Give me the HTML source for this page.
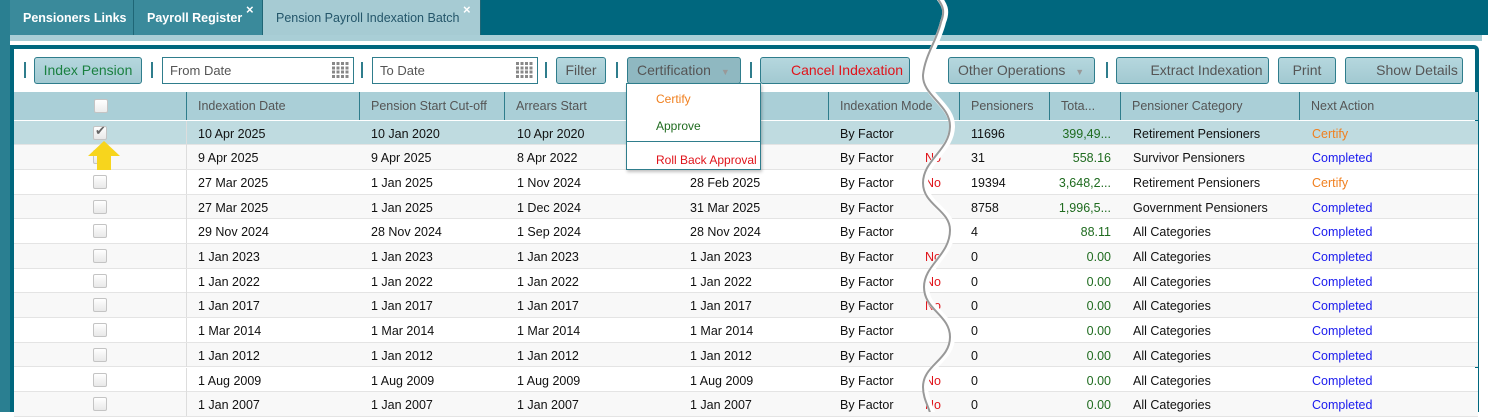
<!DOCTYPE html>
<html><head><meta charset="utf-8"><style>
*{box-sizing:border-box;margin:0;padding:0}
body{width:1488px;height:412px;overflow:hidden;background:#fff;font-family:"Liberation Sans",sans-serif;font-size:12.5px;color:#111;position:relative}
.a{position:absolute;white-space:nowrap}
.tab{position:absolute;top:0;height:35px;line-height:36px;font-weight:bold;color:#fff;font-size:12.5px;padding-left:13px;border-right:1px solid #1f6676}
.x{position:absolute;top:-6px;color:#fff;font-size:13px;font-weight:bold}
.btn{position:absolute;top:57px;height:27px;border:1px solid #2f7d8c;border-radius:3px;background:linear-gradient(#b5d7de,#a2c9d1);color:#555;font-size:14px;line-height:25px;text-align:center;white-space:nowrap}
.inp{position:absolute;top:57px;height:27px;border:1px solid #2f7d8c;background:#fff;color:#555;font-size:13px;line-height:25px;padding-left:7px}
.sep{position:absolute;top:62px;width:2px;height:16px;background:#2f7d8c}
.hd{position:absolute;top:92px;height:28px;line-height:29px;color:#555;font-size:12.5px;border-left:1px solid #2f7d8c;padding-left:11px}
.row{position:absolute;left:14px;width:1464px;height:24.7px;border-bottom:1px solid #e4e4e4}
.c{position:absolute;top:0;line-height:26px;white-space:nowrap}
.cb{position:absolute;left:79px;top:5px;width:14px;height:14px;border:1px solid #c4c4c4;border-radius:2px;background:linear-gradient(#fff,#e8e8e8)}
</style></head><body>
<div class="a" style="left:0;top:0;width:1488px;height:35px;background:#00677e"></div>
<div class="a" style="left:0;top:35px;width:1482px;height:6px;background:#a9ced6"></div>
<div class="a" style="left:0;top:0;width:10px;height:412px;background:#2a7f91"></div>
<div class="tab" style="left:10px;width:124px;background:#3a8a9b">Pensioners Links</div>
<div class="tab" style="left:134px;width:129px;background:#3a8a9b">Payroll Register<span class="x" style="left:112px;top:0;line-height:20px">×</span></div>
<div class="tab" style="left:263px;width:218px;background:#a6cbd3;color:#24566a;font-weight:normal">Pension Payroll Indexation Batch<span class="x" style="left:200px;top:0;line-height:20px">×</span></div>
<div class="a" style="left:10px;top:45px;width:1469px;height:367px;border:4px solid #00677e;border-bottom:none;border-top-right-radius:5px"></div>
<div class="sep" style="left:24px"></div>
<div class="btn" style="left:34px;width:108px;color:#1a8040">Index Pension</div>
<div class="sep" style="left:151px"></div>
<div class="inp" style="left:162px;width:192px">From Date<span class="a" style="right:4px;top:4px;width:17px;height:16px;background:repeating-linear-gradient(90deg,#888 0 3px,transparent 3px 4.5px),#fff;-webkit-mask:repeating-linear-gradient(#000 0 3px,transparent 3px 4.3px)"></span></div>
<div class="sep" style="left:361px"></div>
<div class="inp" style="left:372px;width:166px">To Date<span class="a" style="right:4px;top:4px;width:17px;height:16px;background:repeating-linear-gradient(90deg,#888 0 3px,transparent 3px 4.5px),#fff;-webkit-mask:repeating-linear-gradient(#000 0 3px,transparent 3px 4.3px)"></span></div>
<div class="sep" style="left:545px"></div>
<div class="btn" style="left:556px;width:50px">Filter</div>
<div class="sep" style="left:616px"></div>
<div class="btn" style="left:627px;width:114px;background:#8fb8c1;color:#555;text-align:left;padding-left:9px">Certification <span style="color:#999;font-size:9px;margin-left:6px">▼</span></div>
<div class="sep" style="left:750px"></div>
<div class="btn" style="left:760px;width:150px;color:#e0131a;padding-left:24px">Cancel Indexation</div>
<div class="btn" style="left:948px;width:147px;text-align:left;padding-left:9px">Other Operations <span style="color:#999;font-size:9px;margin-left:6px">▼</span></div>
<div class="sep" style="left:1106px"></div>
<div class="btn" style="left:1116px;width:153px;padding-left:28px">Extract Indexation</div>
<div class="btn" style="left:1278px;width:58px">Print</div>
<div class="btn" style="left:1345px;width:118px;padding-left:26px">Show Details</div>
<div class="a" style="left:14px;top:92px;width:1464px;height:28px;background:#aacfd7"></div>
<div class="a" style="left:94px;top:99px;width:14px;height:14px;border:1px solid #c4c4c4;border-radius:2px;background:linear-gradient(#fff,#ececec)"></div>
<div class="hd" style="left:186px">Indexation Date</div>
<div class="hd" style="left:359px">Pension Start Cut-off</div>
<div class="hd" style="left:504px">Arrears Start</div>
<div class="hd" style="left:828px">Indexation Mode</div>
<div class="hd" style="left:959px">Pensioners</div>
<div class="hd" style="left:1049px">Tota...</div>
<div class="hd" style="left:1120px">Pensioner Category</div>
<div class="hd" style="left:1299px">Next Action</div>
<div id="rows"></div>
<script>
var d=[["10 Apr 2025","10 Jan 2020","10 Apr 2020","","","11696","399,49...","Retirement Pensioners","Certify"],
["9 Apr 2025","9 Apr 2025","8 Apr 2022","","No","31","558.16","Survivor Pensioners","Completed"],
["27 Mar 2025","1 Jan 2025","1 Nov 2024","28 Feb 2025","No","19394","3,648,2...","Retirement Pensioners","Certify"],
["27 Mar 2025","1 Jan 2025","1 Dec 2024","31 Mar 2025","","8758","1,996,5...","Government Pensioners","Completed"],
["29 Nov 2024","28 Nov 2024","1 Sep 2024","28 Nov 2024","","4","88.11","All Categories","Completed"],
["1 Jan 2023","1 Jan 2023","1 Jan 2023","1 Jan 2023","No","0","0.00","All Categories","Completed"],
["1 Jan 2022","1 Jan 2022","1 Jan 2022","1 Jan 2022","No","0","0.00","All Categories","Completed"],
["1 Jan 2017","1 Jan 2017","1 Jan 2017","1 Jan 2017","No","0","0.00","All Categories","Completed"],
["1 Mar 2014","1 Mar 2014","1 Mar 2014","1 Mar 2014","","0","0.00","All Categories","Completed"],
["1 Jan 2012","1 Jan 2012","1 Jan 2012","1 Jan 2012","","0","0.00","All Categories","Completed"],
["1 Aug 2009","1 Aug 2009","1 Aug 2009","1 Aug 2009","No","0","0.00","All Categories","Completed"],
["1 Jan 2007","1 Jan 2007","1 Jan 2007","1 Jan 2007","No","0","0.00","All Categories","Completed"]];
var h="";
d.forEach(function(r,i){var t=120.5+i*24.7;var bg=i==0?"#bfdbe0":(i%2?"#f8f8f8":"#fff");
h+='<div class="row" style="top:'+t+'px;background:'+bg+'"><div class="cb">'+(i==0?'<span style="position:absolute;left:1px;top:-4px;color:#666;font-size:13px">✔</span>':'')+'</div>'+
'<div class="a" style="left:172px;top:0;width:1px;height:24px;background:#ddd"></div>'+
'<div class="c" style="left:184px">'+r[0]+'</div><div class="c" style="left:357px">'+r[1]+'</div><div class="c" style="left:503px">'+r[2]+'</div><div class="c" style="left:676px">'+r[3]+'</div>'+
'<div class="c" style="left:826px">By Factor</div><div class="c" style="left:911px;color:#e0131a">'+r[4]+'</div><div class="c" style="left:957px">'+r[5]+'</div>'+
'<div class="c" style="left:1030px;width:67px;text-align:right;color:#1f6b1f">'+r[6]+'</div><div class="c" style="left:1119px">'+r[7]+'</div>'+
'<div class="c" style="left:1298px;color:'+(r[8]=="Certify"?"#f08020":"#1a1aee")+'">'+r[8]+'</div></div>';});
document.getElementById("rows").innerHTML=h;
</script>
<div class="a" style="left:626px;top:83px;width:135px;height:87px;background:#fff;border:1px solid #2f7d8c;box-shadow:1px 2px 3px rgba(0,0,0,.25);font-size:12px">
<div class="a" style="left:29px;top:8px;color:#f08020">Certify</div>
<div class="a" style="left:29px;top:35px;color:#1f6b1f">Approve</div>
<div class="a" style="left:0;top:57px;width:133px;height:1px;background:#2f7d8c"></div>
<div class="a" style="left:29px;top:69px;color:#e0131a">Roll Back Approval</div>
</div>
<svg class="a" style="left:0;top:0" width="1488" height="412">
<path d="M930,-10 C945,5 945,12 941,22 C937,40 925,55 923,75 C922,95 950,105 950,126 C950,150 923,160 923,183 C923,205 950,210 950,230 C950,255 924,265 924,287 C924,310 950,315 950,337 C950,360 923,365 923,387 C923,400 930,408 932,420" fill="none" stroke="#fff" stroke-width="6" transform="translate(2,0)"/>
<path d="M930,-10 C945,5 945,12 941,22 C937,40 925,55 923,75 C922,95 950,105 950,126 C950,150 923,160 923,183 C923,205 950,210 950,230 C950,255 924,265 924,287 C924,310 950,315 950,337 C950,360 923,365 923,387 C923,400 930,408 932,420" fill="none" stroke="#999" stroke-width="2"/>
<path d="M104,141 L120,156 L111,156 L111,170 L97,170 L97,156 L88,156 Z" fill="#f7d51d"/>
</svg>
</body></html>
